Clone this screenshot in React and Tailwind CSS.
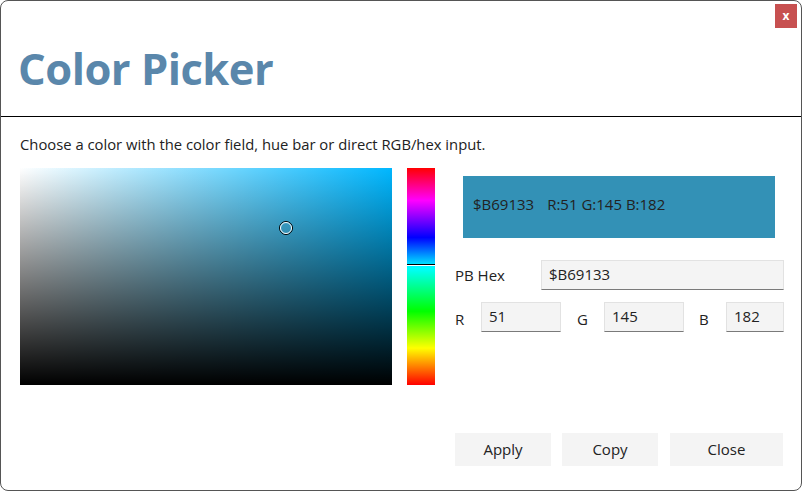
import { useState } from "react";

const FONT = { fontFamily: '"Open Sans", "Noto Sans", sans-serif' };

function Field({ value, className = "" }) {
  return (
    <div
      className={`h-[30px] bg-[#f4f4f4] border border-[#e2e2e2] border-b-[#7a7a7a] flex items-center px-[7px] pb-[2px] text-[15px] text-[#222] ${className}`}
    >
      {value}
    </div>
  );
}

function Btn({ label, className = "" }) {
  return (
    <button
      className={`h-[33px] bg-[#f4f4f4] text-[15px] text-[#222] flex items-center justify-center ${className}`}
    >
      {label}
    </button>
  );
}

export default function App() {
  const [rgb] = useState({ r: 51, g: 145, b: 182 });

  return (
    <div
      className="w-[802px] h-[491px] bg-white border border-[#555] rounded-[8px] overflow-hidden flex flex-col relative"
      style={FONT}
    >
      {/* header */}
      <div className="h-[115px] shrink-0 flex items-end pl-[17px] pb-[26px]">
        <h1 className="text-[43.5px] font-bold leading-none text-[#5a87ab] tracking-[-0.5px]">
          Color Picker
        </h1>
      </div>
      <button className="absolute top-[3px] right-[4px] w-[22px] h-[24px] bg-[#c75050] text-white text-[12px] font-bold flex items-center justify-center">
        x
      </button>
      <div className="h-px bg-black shrink-0" />

      <p className="mt-[17px] ml-[19px] text-[14.8px] text-[#222] leading-[20px]">
        Choose a color with the color field, hue bar or direct RGB/hex input.
      </p>

      <div className="flex mt-[14px] pl-[19px]">
        {/* SV field */}
        <div className="relative w-[372px] h-[217px] bg-[linear-gradient(to_top,#000,transparent),linear-gradient(to_right,#fff,#00b7ff)]">
          <div className="absolute left-[259px] top-[53px] w-[14px] h-[14px] rounded-full border border-black">
            <div className="w-full h-full rounded-full border border-white" />
          </div>
        </div>

        {/* hue bar */}
        <div className="relative ml-[15px] w-[28px] h-[217px] bg-[linear-gradient(to_bottom,#ff0000_0%,#ff00ff_15%,#0000ff_32%,#00ffff_46%,#00ff00_66%,#ffff00_83%,#ff0000_100%)]">
          <div className="absolute left-0 right-0 top-[96px] h-px bg-black" />
          <div className="absolute left-0 right-0 top-[97px] h-px bg-white" />
        </div>

        {/* right panel */}
        <div className="flex-1 flex flex-col pl-[20px] pr-[17px]">
          <div className="ml-[8px] mr-[9px] mt-[8px] h-[62px] bg-[#3391b6] flex items-center px-[10px] pb-[5px] text-[15px] text-[#222]">
            <span>$B69133</span>
            <span className="ml-[13px]">
              R:{rgb.r} G:{rgb.g} B:{rgb.b}
            </span>
          </div>

          <div className="flex items-center mt-[22px]">
            <span className="w-[86px] text-[15px] text-[#222] pt-[1px]">PB Hex</span>
            <Field value="$B69133" className="flex-1" />
          </div>

          <div className="flex items-center mt-[12px]">
            <span className="w-[26px] text-[15px] text-[#222] pt-[4px]">R</span>
            <Field value="51" className="w-[80px]" />
            <span className="ml-[16px] w-[27px] text-[15px] text-[#222] pt-[4px]">G</span>
            <Field value="145" className="w-[80px]" />
            <span className="ml-[15px] w-[27px] text-[15px] text-[#222] pt-[4px]">B</span>
            <Field value="182" className="flex-1" />
          </div>
        </div>
      </div>

      <div className="mt-auto mb-[24px] flex justify-end pr-[18px] gap-[11px]">
        <Btn label="Apply" className="w-[96px]" />
        <Btn label="Copy" className="w-[96px]" />
        <Btn label="Close" className="w-[113px] ml-px" />
      </div>
    </div>
  );
}
